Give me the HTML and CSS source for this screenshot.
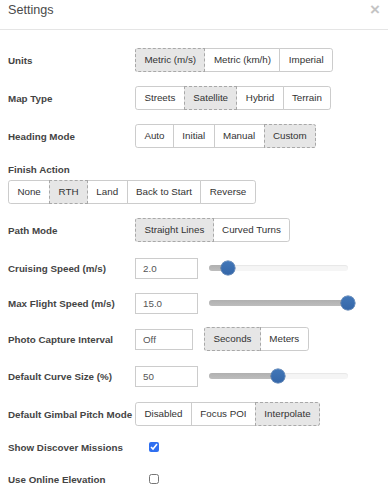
FILE: index.html
```html
<!DOCTYPE html>
<html lang="en">
<head>
    <meta charset="UTF-8">
    <meta name="viewport" content="width=device-width, initial-scale=1.0">
    <title>Settings</title>
    <link rel="stylesheet" href="styles.css">
</head>
<body>
    <div class="modal">
        <div class="modal-header">
            <h4 class="modal-title">Settings</h4>
            <span class="close">&times;</span>
        </div>
        <div class="modal-body">
            <div class="row">
                <label>Units</label>
                <div class="btn-group">
                    <button class="btn active">Metric (m/s)</button><button class="btn">Metric (km/h)</button><button class="btn">Imperial</button>
                </div>
            </div>
            <div class="row">
                <label>Map Type</label>
                <div class="btn-group">
                    <button class="btn">Streets</button><button class="btn active">Satellite</button><button class="btn">Hybrid</button><button class="btn">Terrain</button>
                </div>
            </div>
            <div class="row">
                <label>Heading Mode</label>
                <div class="btn-group">
                    <button class="btn">Auto</button><button class="btn">Initial</button><button class="btn">Manual</button><button class="btn active">Custom</button>
                </div>
            </div>
            <div class="stack">
                <label>Finish Action</label>
                <div class="btn-group">
                    <button class="btn">None</button><button class="btn active">RTH</button><button class="btn">Land</button><button class="btn">Back to Start</button><button class="btn">Reverse</button>
                </div>
            </div>
            <div class="row">
                <label>Path Mode</label>
                <div class="btn-group">
                    <button class="btn active">Straight Lines</button><button class="btn">Curved Turns</button>
                </div>
            </div>
            <div class="row row-cruise">
                <label>Cruising Speed (m/s)</label>
                <div class="field">
                    <input class="form-control" type="text" value="2.0">
                    <div class="slider">
                        <div class="slider-track"><div class="slider-selection" style="width: 13.7%"></div></div>
                        <div class="slider-handle" style="left: 13.7%"></div>
                    </div>
                </div>
            </div>
            <div class="row row-max">
                <label>Max Flight Speed (m/s)</label>
                <div class="field">
                    <input class="form-control" type="text" value="15.0">
                    <div class="slider">
                        <div class="slider-track"><div class="slider-selection" style="width: 100%"></div></div>
                        <div class="slider-handle" style="left: 100%"></div>
                    </div>
                </div>
            </div>
            <div class="row row-photo">
                <label>Photo Capture Interval</label>
                <div class="field">
                    <input class="form-control narrow" type="text" value="Off">
                    <div class="btn-group">
                        <button class="btn active">Seconds</button><button class="btn">Meters</button>
                    </div>
                </div>
            </div>
            <div class="row">
                <label>Default Curve Size (%)</label>
                <div class="field">
                    <input class="form-control" type="text" value="50">
                    <div class="slider">
                        <div class="slider-track"><div class="slider-selection" style="width: 49.6%"></div></div>
                        <div class="slider-handle" style="left: 49.6%"></div>
                    </div>
                </div>
            </div>
            <div class="row row-gimbal">
                <label>Default Gimbal Pitch Mode</label>
                <div class="btn-group">
                    <button class="btn">Disabled</button><button class="btn">Focus POI</button><button class="btn active">Interpolate</button>
                </div>
            </div>
            <div class="row row-check">
                <label>Show Discover Missions</label>
                <div><input type="checkbox" class="check" checked></div>
            </div>
            <div class="row row-check">
                <label>Use Online Elevation</label>
                <div><input type="checkbox" class="check"></div>
            </div>
        </div>
    </div>
</body>
</html>
```

FILE: styles.css
```css
body {margin: 0; background: #ffffff; font-family: "Liberation Sans", Arial, sans-serif; color: #333333;}
.modal {width: 388px;}

.modal-header {height: 30px; border-bottom: 1px solid #e5e5e5; display: flex; justify-content: space-between; align-items: flex-start; padding: 1px 8px 0 8px; box-sizing: border-box;}
.modal-title {margin: 0; font-size: 12.6px; line-height: 18px; font-weight: normal; color: #4a4a4a;}
.close {font-size: 17px; line-height: 18px; font-weight: bold; color: #c4c4c4; margin-right: 0;}

.modal-body {padding: 18px 8px 0 8px;}
label {font-size: 9.8px; font-weight: bold; color: #444444; white-space: nowrap;}

.row {display: grid; grid-template-columns: 127px auto; align-items: center; height: 24px; margin-bottom: 14px;}
.row-cruise {margin-bottom: 11px;}
.row-max {margin-bottom: 12px;}
.row-photo {margin-bottom: 13px;}
.row-gimbal {margin-bottom: 9px;}
.row-check {margin-bottom: 8px;}

.stack {display: flex; flex-direction: column; align-items: flex-start; margin-top: 16px; margin-bottom: 14px;}
.stack label {line-height: 12px; margin-bottom: 4px;}

.btn-group {display: inline-flex; justify-self: start;}
.btn {font-family: inherit; font-size: 9.8px; color: #333333; background: #ffffff; border: 1px solid #cccccc; height: 24px; line-height: 22px; padding: 0 8.4px; margin: 0; border-radius: 0; position: relative;}
.btn + .btn {margin-left: -1px;}
.btn:first-child {border-radius: 2.8px 0 0 2.8px;}
.btn:last-child {border-radius: 0 2.8px 2.8px 0;}
.btn.active {background: #e6e6e6; border: 1px dashed #a8a8a8; z-index: 2;}

.field {display: flex; align-items: center; gap: 11px;}
.form-control {width: 63px; height: 21px; box-sizing: border-box; border: 1px solid #cccccc; padding: 0 7px; font-family: inherit; font-size: 9.8px; color: #555555; margin: 0; border-radius: 0;}
.form-control.narrow {width: 58px;}

.slider {position: relative; width: 139px; height: 14px;}
.slider-track {position: absolute; left: 0; right: 0; top: 4px; height: 6px; border-radius: 3px; background: #f5f5f5; box-shadow: inset 0 1px 1px rgba(0,0,0,0.06); overflow: hidden;}
.slider-selection {height: 100%; background: linear-gradient(to bottom, #b0b0b0, #bdbdbd);}
.slider-handle {position: absolute; top: 0; width: 14px; height: 14px; margin-left: -7px; border-radius: 50%; background: linear-gradient(to bottom, #4277b8, #3466a8); box-shadow: 0 0 0 0.5px #2d5c99;}

.check {width: 10px; height: 10px; margin: 0 0 0 14px; accent-color: #2f6ff0; display: block;}
```
